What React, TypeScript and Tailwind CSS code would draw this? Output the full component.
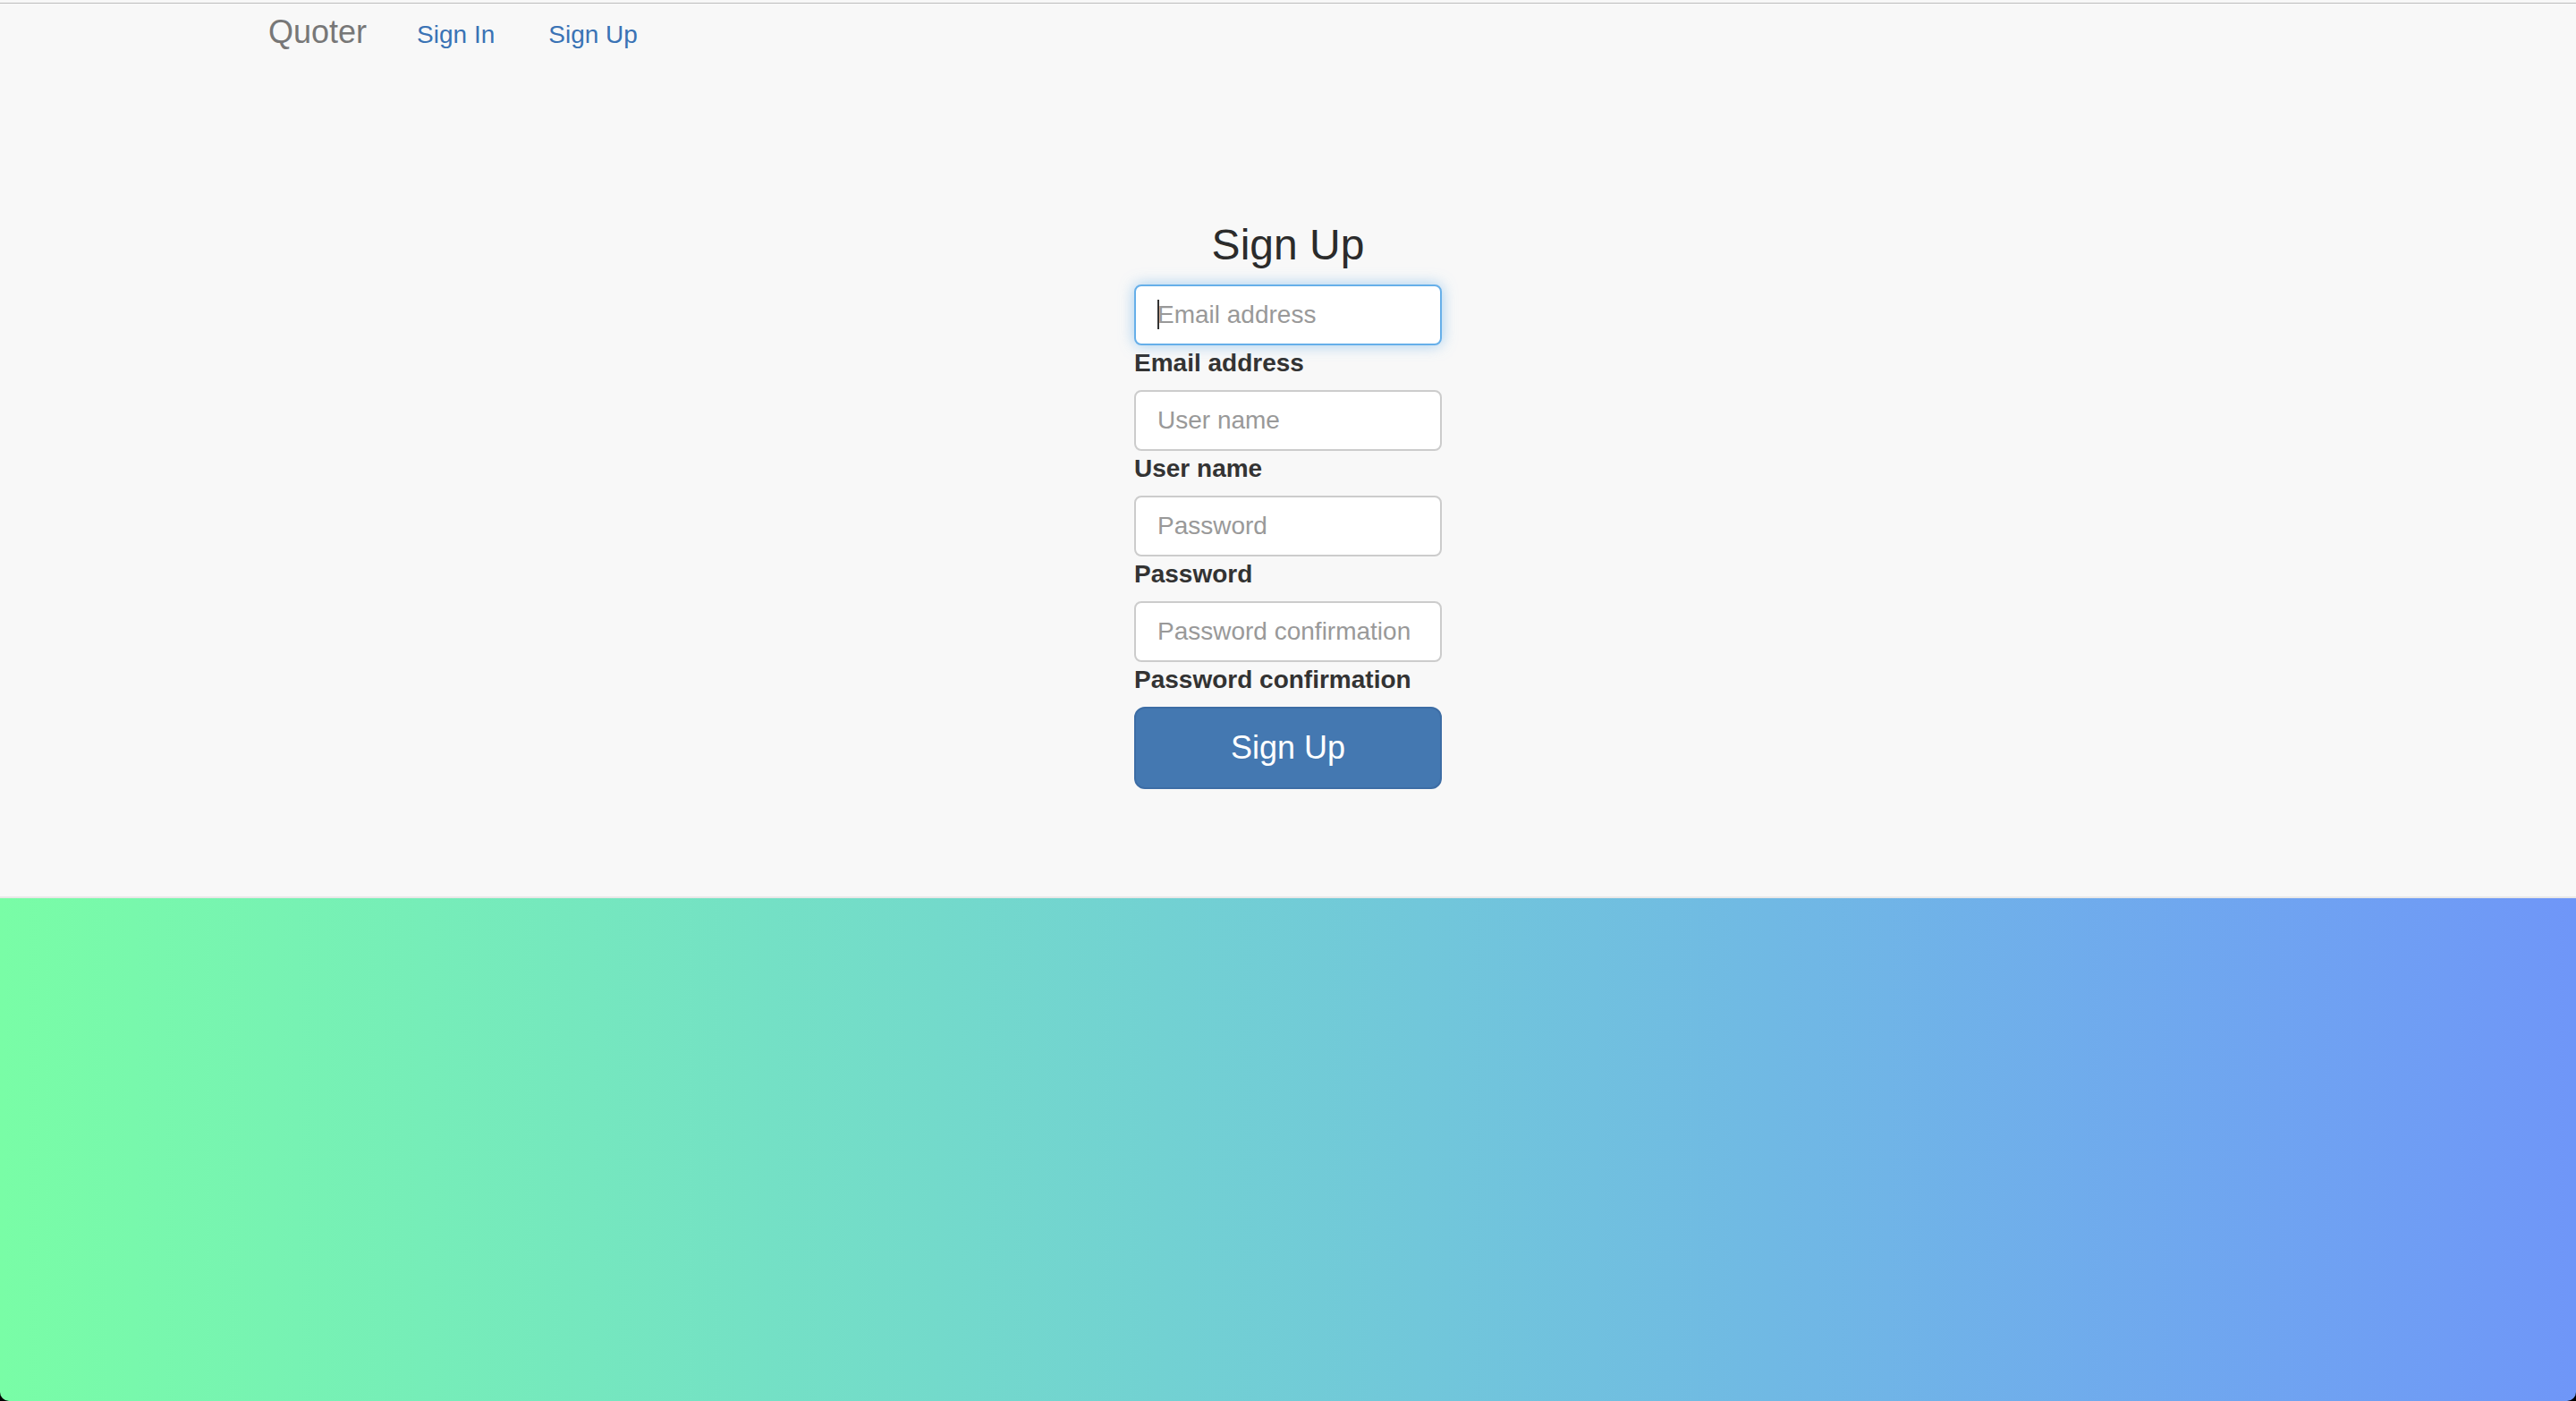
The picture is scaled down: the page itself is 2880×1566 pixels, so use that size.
const fields = [
  { placeholder: "Email address", label: "Email address", type: "email", focused: true },
  { placeholder: "User name", label: "User name", type: "text", focused: false },
  { placeholder: "Password", label: "Password", type: "password", focused: false },
  { placeholder: "Password confirmation", label: "Password confirmation", type: "password", focused: false },
];

const App = () => {
  return (
    <div className="w-full min-h-[1566px] bg-black flex flex-col font-['Liberation_Sans',Arial,sans-serif] text-[#333]">
      <div className="bg-[#f8f8f8] h-[1002px] flex flex-col">
        <div className="h-[3px]" />
        <div className="h-[1px] bg-[#bcbcbc]" />
        <nav className="w-[2340px] mx-auto px-[30px] pt-[12px] flex items-baseline">
          <span className="text-[36px] leading-[40px] text-[#777]">Quoter</span>
          <a className="ml-[56px] text-[28px] leading-[40px] text-[#3a73b5]">Sign In</a>
          <a className="ml-[60px] text-[28px] leading-[40px] text-[#3a73b5]">Sign Up</a>
        </nav>
        <section className="mt-[188px] w-[344px] mx-auto flex flex-col">
          <h3 className="text-[48px] leading-[53px] text-center text-[#2b2b2b] mb-[18px]">Sign Up</h3>
          {fields.map((f) => (
            <div key={f.label} className="flex flex-col">
              <div className="relative">
                <input
                  type={f.type}
                  placeholder={f.placeholder}
                  className={
                    f.focused
                      ? "w-full h-[68px] px-[24px] text-[28px] bg-white rounded-[8px] border-2 border-[#66afe9] outline-none shadow-[0_0_16px_rgba(102,175,233,0.6)] placeholder:text-[#999]"
                      : "w-full h-[68px] px-[24px] text-[28px] bg-white rounded-[8px] border-2 border-[#ccc] outline-none placeholder:text-[#999]"
                  }
                />
                {f.focused && (
                  <span className="absolute left-[26px] top-[17px] w-[2px] h-[33px] bg-[#333]" />
                )}
              </div>
              <label className="text-[28px] leading-[40px] font-bold mb-[10px]">{f.label}</label>
            </div>
          ))}
          <button className="w-full h-[92px] rounded-[12px] bg-[#4478b1] border-2 border-[#3d6da5] text-white text-[36px]">
            Sign Up
          </button>
        </section>
      </div>
      <div className="h-[2px] bg-[#e7e7e7]" />
      <div className="flex-1 rounded-b-[10px] bg-gradient-to-r from-[#79fda6] to-[#6f96f8]" />
    </div>
  );
};

export default App;
